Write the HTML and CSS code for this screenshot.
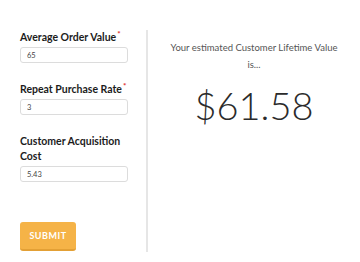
FILE: index.html
```html
<!DOCTYPE html>
<html lang="en">
<head>
    <meta charset="UTF-8">
    <meta name="viewport" content="width=device-width, initial-scale=1.0">
    <title>Customer Lifetime Value</title>
    <link rel="stylesheet" href="styles.css">
</head>
<body>

    <div class="calculator">
        <form class="form-col">
            <div class="field">
                <label for="aov">Average Order Value<span class="req">*</span></label>
                <input type="text" id="aov" value="65">
            </div>
            <div class="field">
                <label for="rpr">Repeat Purchase Rate<span class="req">*</span></label>
                <input type="text" id="rpr" value="3">
            </div>
            <div class="field">
                <label for="cac">Customer Acquisition Cost</label>
                <input type="text" id="cac" value="5.43">
            </div>
            <button type="submit" class="submit-btn">Submit</button>
        </form>

        <div class="result-col">
            <p class="result-intro">Your estimated Customer Lifetime Value is...</p>
            <div class="result-value">$61.58</div>
        </div>
    </div>

</body>
</html>
```

FILE: styles.css
```css
body {
    margin: 0;
    font-family: Lato, "Open Sans", sans-serif;
    background: #fff;
    color: #222;
}
.calculator {
    display: flex;
    align-items: flex-start;
    padding-top: 30px;
}
.form-col {
    width: 126px;
    margin: 0;
    padding: 0 0 1px 20px;
    border-right: 2px solid #e6e6e6;
}
.field {
    margin-bottom: 19px;
}
.field label {
    display: block;
    max-width: 115px;
    font-size: 10.5px;
    font-weight: 700;
    line-height: 15px;
    color: #1c1c1c;
    margin-bottom: 2px;
}
.req {
    color: #e02b2b;
    font-size: 8px;
    line-height: 8px;
    vertical-align: top;
    margin-left: 1px;
}
.field input {
    display: block;
    box-sizing: border-box;
    width: 108px;
    height: 16px;
    margin: 0;
    border: 1px solid #dcdcdc;
    border-radius: 3px;
    padding: 0 6px;
    font-family: Lato, sans-serif;
    font-size: 7.5px;
    color: #444;
}
.submit-btn {
    display: block;
    margin-top: 40px;
    width: 56px;
    height: 29px;
    background-color: #f5b347;
    border: none;
    border-bottom: 2px solid #e3a035;
    border-radius: 3px;
    color: #fff;
    font-family: Lato, sans-serif;
    font-size: 9px;
    font-weight: 700;
    letter-spacing: 0.5px;
    text-transform: uppercase;
    cursor: pointer;
}
.result-col {
    flex: 1;
    text-align: center;
    padding: 9px 20px 0;
}
.result-intro {
    margin: 0 auto;
    max-width: 175px;
    font-size: 9.5px;
    line-height: 17px;
    color: #555;
}
.result-value {
    margin-top: 12px;
    font-size: 38px;
    font-weight: 300;
    line-height: 40px;
    color: #2b2b2b;
}
```
